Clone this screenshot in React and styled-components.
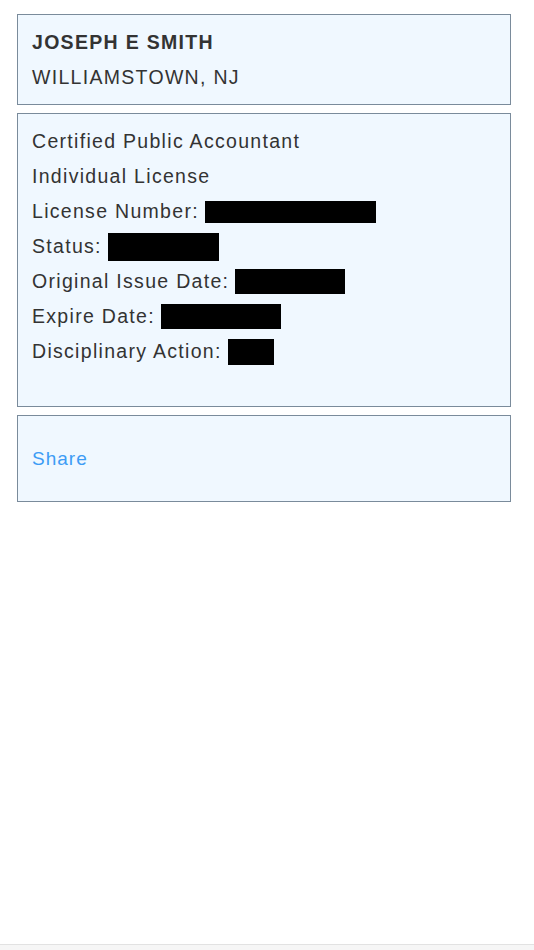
import React from "react";
import styled, { createGlobalStyle } from "styled-components";

const Global = createGlobalStyle`
  html, body { margin: 0; padding: 0; background: #ffffff; }
  body { font-family: "Liberation Sans", Arial, Helvetica, sans-serif; }
`;

const Page = styled.div`
  min-height: 100vh;
  display: flex;
  flex-direction: column;
  box-sizing: border-box;
`;

const Content = styled.main`
  flex: 1;
  display: flex;
  flex-direction: column;
  gap: 8px;
  padding: 14px 0 0 17px;
`;

const Card = styled.section`
  width: 494px;
  box-sizing: border-box;
  background: #f0f8ff;
  border: 1.5px solid #7a8b9b;
  padding: ${(p) => p.$pad || "10px 14px 9px"};
  color: #333333;
  font-size: 19.5px;
  line-height: 35px;
  letter-spacing: 1.3px;
`;

const Line = styled.div`
  display: flex;
  align-items: center;
  gap: 6px;
  height: 35px;
  font-weight: ${(p) => (p.$bold ? 700 : 400)};
  white-space: nowrap;
`;

const Redacted = styled.span`
  display: block;
  background: #000;
  width: ${(p) => p.$w}px;
  height: ${(p) => p.$h || 24}px;
`;

const ShareLink = styled.a`
  color: #3d9cf5;
  text-decoration: none;
  font-size: 19px;
  letter-spacing: 1px;
  cursor: pointer;
`;

const BottomBar = styled.div`
  height: 5px;
  border-top: 1px solid #e2e2e2;
  background: #f6f6f6;
`;

export default function App() {
  return (
    <>
      <Global />
      <Page>
        <Content>
          <Card>
            <Line $bold>JOSEPH E SMITH</Line>
            <Line>WILLIAMSTOWN, NJ</Line>
          </Card>
          <Card $pad="10px 14px 37px">
            <Line>Certified Public Accountant</Line>
            <Line>Individual License</Line>
            <Line>
              License Number:<Redacted $w={171} $h={22} />
            </Line>
            <Line>
              Status:<Redacted $w={111} $h={28} />
            </Line>
            <Line>
              Original Issue Date:<Redacted $w={110} $h={25} />
            </Line>
            <Line>
              Expire Date:<Redacted $w={120} $h={25} />
            </Line>
            <Line>
              Disciplinary Action:<Redacted $w={46} $h={26} />
            </Line>
          </Card>
          <Card $pad="25px 14px 25px">
            <ShareLink>Share</ShareLink>
          </Card>
        </Content>
        <BottomBar />
      </Page>
    </>
  );
}
